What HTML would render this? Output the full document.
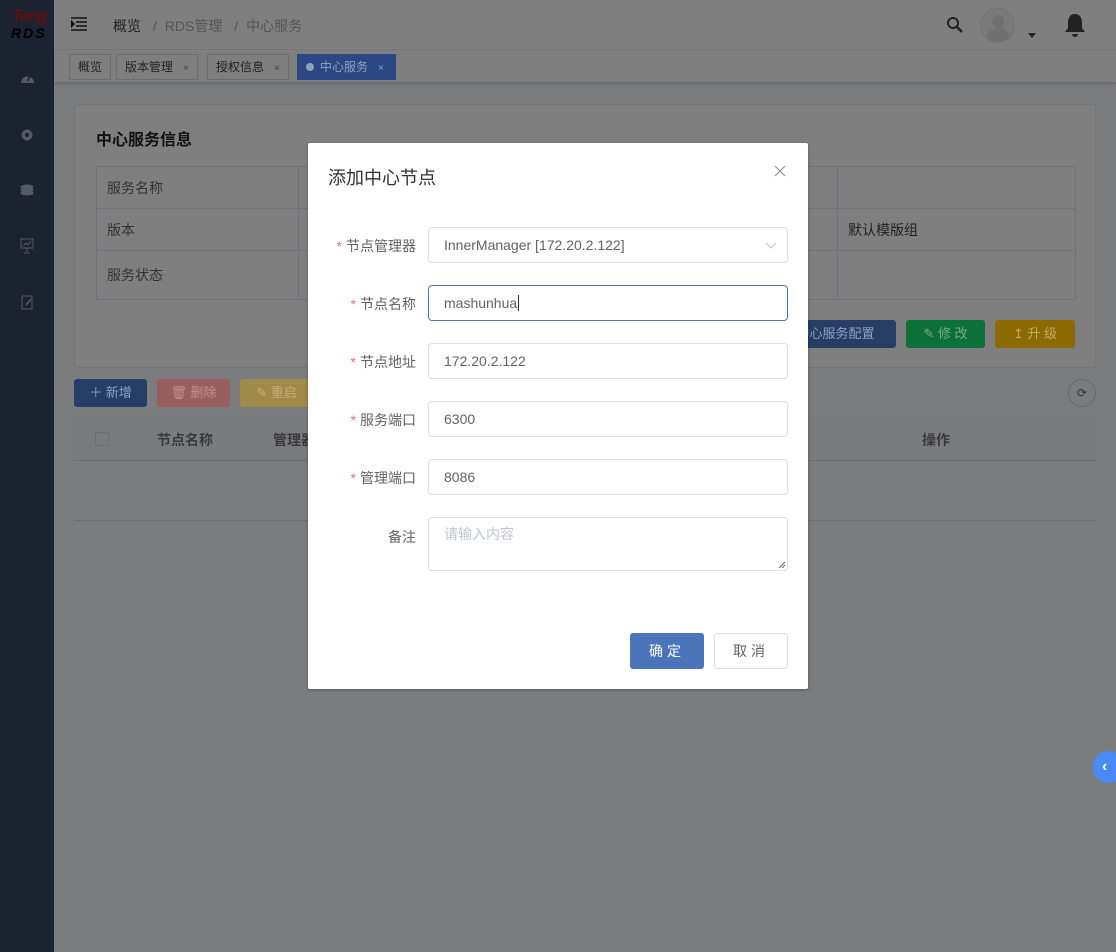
<!DOCTYPE html>
<html><head><meta charset="utf-8"><style>
*{box-sizing:border-box;margin:0;padding:0}
body{width:1116px;height:952px;overflow:hidden;background:#7b7c7d;font-family:"Liberation Sans","Noto Sans CJK SC",sans-serif;font-size:14px;color:#333;position:relative}
.abs{position:absolute}
.side{left:0;top:0;width:54px;height:952px;background:#1b2230}
.hdr{left:54px;top:0;width:1062px;height:50px;background:#7f7f7f;border-bottom:1px solid #777}
.tabs{left:54px;top:50px;width:1062px;height:33px;background:#7f7f7f;border-bottom:1px solid #6f6f6f;box-shadow:0 1px 2px rgba(0,0,0,.15)}
.tab{position:absolute;top:4px;height:26px;border:1px solid #6d6d6d;font-size:12px;line-height:24px;padding:0 8px;color:#222;background:#7f7f7f}
.tab i{font-style:normal;font-size:10px;color:#444;margin-left:10px}
.card{left:74px;top:104px;width:1022px;height:264px;background:#7f7f7f;border:1px solid #757575;border-radius:4px}
td{border:1px solid #6f7180;color:#333;padding-left:10px;font-size:14px}
.btn{position:absolute;height:28px;border-radius:3px;font-size:13px;line-height:28px;text-align:center}
.dlg{left:308px;top:143px;width:500px;height:546px;background:#fff;border-radius:2px;box-shadow:0 1px 3px rgba(0,0,0,.3)}
.lbl{position:absolute;right:392px;font-size:14px;color:#606266;width:120px;text-align:right}
.lbl b{color:#f56c6c;font-weight:normal;margin-right:4px}
.inp{position:absolute;left:120px;width:360px;height:36px;border:1px solid #dcdfe6;border-radius:4px;padding-left:15px;line-height:34px;color:#606266;font-size:14px}
</style></head><body>
<div class="abs side">
 <div class="abs" style="left:12px;top:9px;color:#8b0000;font-style:italic;font-size:16px;line-height:16px">Tong</div>
 <div class="abs" style="left:11px;top:25px;color:#000;font-style:italic;font-weight:bold;font-size:14px;letter-spacing:2px">RDS</div>
 <svg class="abs" style="left:20px;top:72px" width="15" height="12" viewBox="0 0 15 12"><path d="M1 11A6.5 6.5 0 1 1 14 11Z" fill="#555b66"/><path d="M7.5 9L10 4" stroke="#1b2230" stroke-width="1.5"/></svg>
 <svg class="abs" style="left:20px;top:128px" width="14" height="14" viewBox="0 0 14 14"><circle cx="7" cy="7" r="5.5" fill="#555b66"/><circle cx="7" cy="7" r="2" fill="#1b2230"/></svg>
 <svg class="abs" style="left:20px;top:184px" width="14" height="12" viewBox="0 0 14 12"><ellipse cx="7" cy="3" rx="6.5" ry="2.5" fill="#555b66"/><ellipse cx="7" cy="6" rx="6.5" ry="2.5" fill="#555b66"/><ellipse cx="7" cy="9" rx="6.5" ry="2.5" fill="#555b66"/></svg>
 <svg class="abs" style="left:20px;top:238px" width="14" height="16" viewBox="0 0 14 16"><rect x="1" y="1" width="12" height="9" fill="none" stroke="#555b66"/><path d="M3 8l3-3 2 2 3-4M7 10v4M4 15h6" stroke="#555b66" fill="none"/></svg>
 <svg class="abs" style="left:21px;top:295px" width="13" height="15" viewBox="0 0 13 15"><rect x="1" y="1" width="10" height="13" fill="none" stroke="#555b66"/><path d="M5 10l5-6" stroke="#555b66" stroke-width="1.5"/></svg>
</div>
<div class="abs hdr">
 <svg class="abs" style="left:17px;top:17px" width="16" height="14" viewBox="0 0 16 14"><path d="M0 1h16M5 5h11M5 9h11M0 13h16M0 4l3 3-3 3z" stroke="#111" stroke-width="1.6" fill="#111"/></svg>
 <div class="abs" style="left:59px;top:16px;font-size:14px;color:#222">概览 <span style="color:#555;margin:0 8px">/</span><span style="color:#555">RDS管理</span> <span style="color:#555;margin:0 8px">/</span><span style="color:#555">中心服务</span></div>
 <svg class="abs" style="left:892px;top:16px" width="17" height="17" viewBox="0 0 17 17"><circle cx="7" cy="7" r="5" fill="none" stroke="#222" stroke-width="2"/><path d="M11 11l5 5" stroke="#222" stroke-width="2.5"/></svg>
 <div class="abs" style="left:926px;top:8px;width:35px;height:35px;border-radius:50%;border:1px solid #757575;background:#7a7a7a;overflow:hidden"><div class="abs" style="left:11px;top:6px;width:12px;height:13px;border-radius:50%;background:#707070"></div><div class="abs" style="left:6px;top:19px;width:22px;height:18px;border-radius:50%;background:#707070"></div></div>
 <div class="abs" style="left:974px;top:33px;border:4px solid transparent;border-top:5px solid #222"></div>
 <svg class="abs" style="left:1010px;top:13px" width="22" height="25" viewBox="0 0 22 25"><path d="M11 1C6 1 4 5 4 10v5l-3 4h20l-3-4v-5c0-5-2-9-7-9z" fill="#222"/><path d="M8 21a3 3 0 0 0 6 0z" fill="#222"/></svg>
</div>
<div class="abs tabs">
 <div class="tab" style="left:15px">概览</div>
 <div class="tab" style="left:62px">版本管理<i>×</i></div>
 <div class="tab" style="left:153px">授权信息<i>×</i></div>
 <div class="tab" style="left:243px;background:#2b4884;border-color:#2b4884;color:#8fa0c0;width:99px"><span style="display:inline-block;width:8px;height:8px;border-radius:50%;background:#8fa0c0;margin-right:6px"></span>中心服务<i style="color:#8fa0c0">×</i></div>
</div>
<div class="abs card">
 <div class="abs" style="left:21px;top:21px;font-size:16px;font-weight:bold;color:#111">中心服务信息</div>
 <table class="abs" style="left:21px;top:61px;width:980px;border-collapse:collapse">
  <tr style="height:42px"><td style="width:202px">服务名称</td><td style="width:539px"></td><td></td></tr>
  <tr style="height:42px"><td>版本</td><td></td><td style="color:#222">默认模版组</td></tr>
  <tr style="height:49px"><td>服务状态</td><td></td><td></td></tr>
 </table>
 <div class="btn" style="left:700px;top:215px;width:121px;background:#263d66;color:#8fa0c0">中心服务配置</div>
 <div class="btn" style="left:831px;top:215px;width:79px;background:#0b7139;color:#7aaa88">✎ 修 改</div>
 <div class="btn" style="left:920px;top:215px;width:80px;background:#8d6a00;color:#c4aa66">↥ 升 级</div>
</div>
<div class="btn" style="left:74px;top:379px;width:73px;background:#263d66;color:#8fa0c0">＋ 新增</div>
<div class="btn" style="left:157px;top:379px;width:73px;background:#9a6060;color:#c09090">🗑 删除</div>
<div class="btn" style="left:240px;top:379px;width:73px;background:#a08a4a;color:#c4b080">✎ 重启</div>
<div class="abs" style="left:1068px;top:379px;width:28px;height:28px;border-radius:50%;border:1px solid #6a6a6a;font-size:12px;text-align:center;line-height:26px;color:#333">⟳</div>
<div class="abs" style="left:74px;top:417px;width:1022px;height:44px;background:#7a7b7e;border-bottom:1px solid #6f6f6f"></div>
<div class="abs" style="left:95px;top:432px;width:14px;height:14px;border:1px solid #6a6e78;border-radius:2px"></div>
<div class="abs" style="left:157px;top:430px;font-weight:bold;color:#3a3a3a">节点名称</div>
<div class="abs" style="left:273px;top:430px;font-weight:bold;color:#3a3a3a">管理器</div>
<div class="abs" style="left:922px;top:430px;font-weight:bold;color:#3a3a3a">操作</div>
<div class="abs" style="left:74px;top:520px;width:1022px;border-top:1px solid #6f6f6f"></div>
<div class="abs" style="left:1093px;top:751px;width:30px;height:32px;border-radius:16px;background:#4a8af4;color:#fff;font-weight:bold;font-size:16px;line-height:32px;padding-left:9px">‹</div>

<div class="abs dlg">
 <div class="abs" style="left:20px;top:21px;font-size:18px;color:#303133">添加中心节点</div>
 <svg class="abs" style="left:466px;top:22px" width="12" height="12" viewBox="0 0 12 12"><path d="M1 1l10 10M11 1L1 11" stroke="#909399" stroke-width="1.2"/></svg>
 <div class="lbl" style="top:93px"><b>*</b>节点管理器</div>
 <div class="inp" style="top:84px">InnerManager [172.20.2.122]<svg class="abs" style="right:10px;top:14px" width="12" height="7" viewBox="0 0 12 7"><path d="M1 1l5 5 5-5" stroke="#c0c4cc" fill="none"/></svg></div>
 <div class="lbl" style="top:151px"><b>*</b>节点名称</div>
 <div class="inp" style="top:142px;border-color:#4a76bb">mashunhua<span style="border-left:1px solid #333;margin-left:1px"></span></div>
 <div class="lbl" style="top:209px"><b>*</b>节点地址</div>
 <div class="inp" style="top:200px">172.20.2.122</div>
 <div class="lbl" style="top:267px"><b>*</b>服务端口</div>
 <div class="inp" style="top:258px">6300</div>
 <div class="lbl" style="top:325px"><b>*</b>管理端口</div>
 <div class="inp" style="top:316px">8086</div>
 <div class="lbl" style="top:384px">备注</div>
 <div class="inp" style="top:374px;height:54px;line-height:20px;padding-top:6px;color:#c0c4cc">请输入内容<svg class="abs" style="right:1px;bottom:1px" width="8" height="8" viewBox="0 0 8 8"><path d="M1 7L7 1M4 7L7 4" stroke="#666"/></svg></div>
 <div class="btn" style="left:322px;top:490px;width:74px;height:36px;line-height:36px;background:#4a75ba;color:#fff;letter-spacing:4px;font-size:14px">确定</div>
 <div class="btn" style="left:406px;top:490px;width:74px;height:36px;line-height:34px;border:1px solid #dcdfe6;color:#606266;letter-spacing:4px;font-size:14px">取消</div>
</div>
</body></html>
